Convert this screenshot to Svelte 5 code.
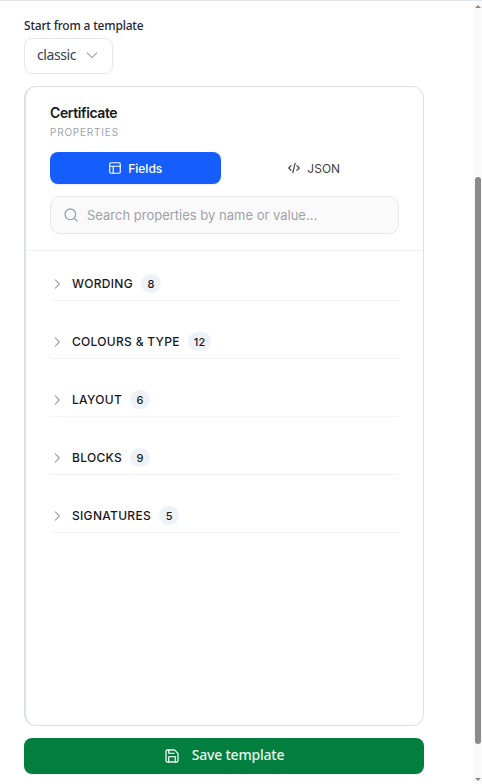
<script lang="ts">
	const groups = [
		{ name: 'WORDING', count: 8 },
		{ name: 'COLOURS & TYPE', count: 12 },
		{ name: 'LAYOUT', count: 6 },
		{ name: 'BLOCKS', count: 9 },
		{ name: 'SIGNATURES', count: 5 }
	];
</script>

<div class="page">
	<div class="main">
		<label class="label" for="tpl">Start from a template</label>
		<button id="tpl" class="select">
			<span>classic</span>
			<svg width="16" height="16" viewBox="0 0 24 24" fill="none" stroke="currentColor" stroke-width="2" stroke-linecap="round" stroke-linejoin="round">
				<path d="m5 9 7 7 7-7" />
			</svg>
		</button>

		<section class="card">
			<header class="head">
				<h2>Certificate</h2>
				<p class="sub">PROPERTIES</p>
				<div class="tabs">
					<button class="tab active">
						<svg width="14" height="14" viewBox="0 0 24 24" fill="none" stroke="currentColor" stroke-width="2" stroke-linecap="round" stroke-linejoin="round">
							<rect x="3" y="3" width="18" height="18" rx="2" />
							<path d="M3 9h18M9 9v12" />
						</svg>
						Fields
					</button>
					<button class="tab">
						<svg width="14" height="14" viewBox="0 0 24 24" fill="none" stroke="currentColor" stroke-width="2" stroke-linecap="round" stroke-linejoin="round">
							<path d="m7 8-4 4 4 4M17 8l4 4-4 4M14 4l-4 16" />
						</svg>
						JSON
					</button>
				</div>
				<div class="search">
					<svg width="16" height="16" viewBox="0 0 24 24" fill="none" stroke="currentColor" stroke-width="2" stroke-linecap="round" stroke-linejoin="round">
						<circle cx="11" cy="11" r="8" />
						<path d="m21 21-4.3-4.3" />
					</svg>
					<input placeholder="Search properties by name or value..." />
				</div>
			</header>

			<div class="list">
				{#each groups as g}
					<div class="row">
						<svg width="14" height="14" viewBox="0 0 24 24" fill="none" stroke="currentColor" stroke-width="2" stroke-linecap="round" stroke-linejoin="round">
							<path d="m9 5 7 7-7 7" />
						</svg>
						<span class="name">{g.name}</span>
						<span class="count">{g.count}</span>
					</div>
				{/each}
			</div>
		</section>

		<button class="save">
			<svg width="16" height="16" viewBox="0 0 24 24" fill="none" stroke="currentColor" stroke-width="2" stroke-linecap="round" stroke-linejoin="round">
				<path d="M15.2 3a2 2 0 0 1 1.4.6l3.8 3.8a2 2 0 0 1 .6 1.4V19a2 2 0 0 1-2 2H5a2 2 0 0 1-2-2V5a2 2 0 0 1 2-2z" />
				<path d="M17 21v-7a1 1 0 0 0-1-1H8a1 1 0 0 0-1 1v7" />
				<path d="M7 3v4a1 1 0 0 0 1 1h7" />
			</svg>
			<span>Save template</span>
		</button>
	</div>

	<div class="scrollbar" aria-hidden="true">
		<span class="arrow up"></span>
		<span class="track"><span class="thumb"></span></span>
		<span class="arrow down"></span>
	</div>
</div>

<style>
	:global(body) {
		margin: 0;
		background: #fff;
		overflow: hidden;
	}

	.page {
		position: relative;
		height: 784px;
		box-sizing: border-box;
		border-top: 1px solid #dfe5ec;
		font-family: Inter, sans-serif;
	}

	.main {
		width: 400px;
		margin-left: 24px;
		padding-top: 17px;
		display: flex;
		flex-direction: column;
		align-items: flex-start;
	}

	.label {
		font-family: "Noto Sans", sans-serif;
		font-size: 12px;
		line-height: 16px;
		font-weight: 500;
		letter-spacing: -0.2px;
		color: #1f2937;
		margin-bottom: 4px;
	}

	.select {
		width: 89px;
		height: 36px;
		box-sizing: border-box;
		padding: 0 12px 3px;
		display: flex;
		align-items: center;
		gap: 8px;
		background: #fff;
		border: 1px solid #e2e8f0;
		border-radius: 8px;
		font-family: "Noto Sans", sans-serif;
		font-size: 14px;
		letter-spacing: -0.4px;
		color: #374151;
	}

	.select svg {
		color: #a8afb9;
	}

	.card {
		width: 100%;
		height: 640px;
		box-sizing: border-box;
		margin-top: 12px;
		background: #fff;
		border: 1px solid #dbe1ea;
		border-left-width: 2px;
		border-radius: 12px;
	}

	.head {
		padding: 17px 24px 16px;
		border-bottom: 1px solid #f1f3f6;
	}

	h2 {
		margin: 0;
		font-size: 14px;
		line-height: 18px;
		font-weight: 600;
		letter-spacing: -0.4px;
		color: #18181b;
	}

	.sub {
		margin: 3px 0 0;
		font-size: 10px;
		line-height: 14px;
		letter-spacing: 0.8px;
		color: #9ca3af;
	}

	.tabs {
		margin-top: 13px;
		display: grid;
		grid-template-columns: 1fr 1fr;
		gap: 8px;
	}

	.tab {
		height: 32px;
		display: flex;
		align-items: center;
		justify-content: center;
		gap: 6px;
		border: 0;
		border-radius: 8px;
		background: transparent;
		font-family: Inter, sans-serif;
		font-size: 12px;
		font-weight: 400;
		color: #3f3f46;
	}

	.tab.active {
		background: #155dfc;
		color: #fff;
		font-weight: 500;
		box-shadow: 0 1px 2px rgba(0, 0, 0, 0.08);
	}

	.search {
		margin-top: 12px;
		height: 38px;
		box-sizing: border-box;
		padding: 0 12px;
		display: flex;
		align-items: center;
		gap: 8px;
		background: #fafafa;
		border: 1px solid #e5e7eb;
		border-radius: 10px;
		color: #9ca3af;
	}

	.search input {
		flex: 1;
		min-width: 0;
		border: 0;
		outline: 0;
		padding: 0;
		background: transparent;
		font-family: Inter, sans-serif;
		font-size: 13px;
	}

	.search input::placeholder {
		color: #a1a1aa;
		opacity: 1;
	}

	.list {
		padding: 16px 24px 0;
		display: flex;
		flex-direction: column;
		gap: 24px;
	}

	.row {
		height: 34px;
		box-sizing: border-box;
		display: flex;
		align-items: center;
		border-bottom: 1px solid #f1f3f6;
		color: #9ca3af;
	}

	.row svg {
		flex: none;
	}

	.name {
		margin-left: 8px;
		font-size: 12px;
		font-weight: 500;
		letter-spacing: 0.3px;
		color: #18181b;
	}

	.count {
		margin-left: 8px;
		min-width: 20px;
		height: 19px;
		box-sizing: border-box;
		padding: 0 6px;
		display: flex;
		align-items: center;
		justify-content: center;
		border-radius: 10px;
		background: #edf1f8;
		font-size: 11px;
		font-weight: 500;
		color: #18181b;
	}

	.save {
		width: 100%;
		height: 36px;
		margin-top: 12px;
		display: flex;
		align-items: center;
		justify-content: center;
		gap: 12px;
		border: 0;
		border-radius: 8px;
		background: #027f3f;
		font-family: "Noto Sans", sans-serif;
		font-size: 14px;
		font-weight: 500;
		letter-spacing: -0.2px;
		color: #e8f5ee;
	}

	.save span {
		padding-bottom: 3px;
	}

	.scrollbar {
		position: absolute;
		top: 0;
		right: 0;
		bottom: 0;
		width: 9px;
		display: flex;
		flex-direction: column;
		align-items: center;
		background: #fafafa;
	}

	.arrow {
		flex: none;
		height: 10px;
		display: flex;
		align-items: center;
	}

	.arrow::before {
		content: "";
		border-left: 3px solid transparent;
		border-right: 3px solid transparent;
	}

	.arrow.up::before {
		border-bottom: 3px solid #8a8a8a;
	}

	.arrow.down::before {
		border-top: 3px solid #8a8a8a;
	}

	.track {
		flex: 1;
		width: 100%;
		display: flex;
		justify-content: center;
	}

	.thumb {
		width: 6px;
		margin-top: 166px;
		height: 567px;
		border-radius: 3px;
		background: #8a8a8a;
	}
</style>
